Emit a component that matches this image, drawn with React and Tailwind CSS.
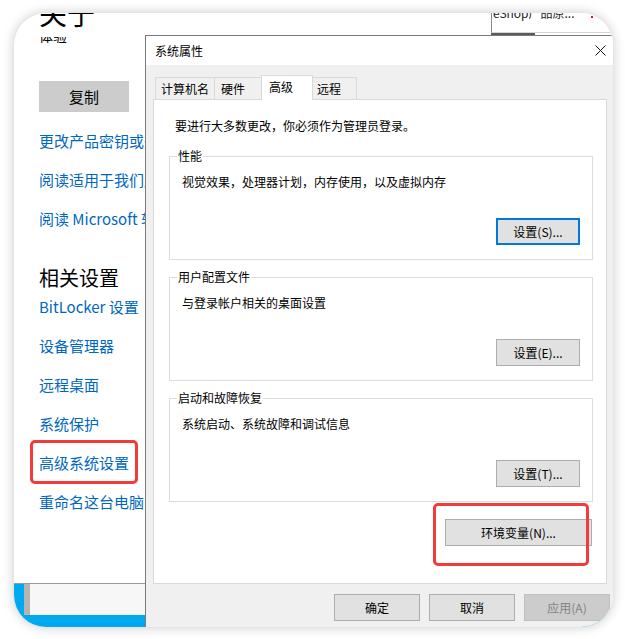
const font = "font-['Noto_Sans_CJK_SC','Liberation_Sans',sans-serif]";

function Btn({ children, focused, disabled, className = "" }) {
  const base = "h-[27px] flex items-center justify-center text-[12px] leading-[16px] ";
  const look = disabled
    ? "bg-[#cccccc] border border-[#bfbfbf] text-[#838383]"
    : focused
    ? "bg-[#e1e1e1] border-2 border-[#0078d7] text-black"
    : "bg-[#e1e1e1] border border-[#adadad] text-black";
  return <div className={base + look + " " + className}>{children}</div>;
}

function Group({ label, text, button, focused }) {
  return (
    <div className="relative ml-[15px] w-[424px] h-[104px] border border-[#dcdcdc]">
      <span className="absolute left-[7px] top-[-9px] px-[1px] bg-white text-[12px] leading-[16px] text-black">
        {label}
      </span>
      <div className="mt-[17px] pl-[12px] text-[12px] leading-[16px] text-black">{text}</div>
      <div className="mt-[28px] flex justify-end pr-[12px]">
        <Btn focused={focused} className="w-[84px]">{button}</Btn>
      </div>
    </div>
  );
}

function Link({ children, className = "" }) {
  return (
    <div className={"text-[15px] leading-[20px] text-[#0067c0] whitespace-nowrap " + className}>{children}</div>
  );
}

function CloseIcon() {
  return (
    <svg width="11" height="11" viewBox="0 0 11 11" fill="none">
      <path d="M0.5 0.5L10.5 10.5M10.5 0.5L0.5 10.5" stroke="#111" strokeWidth="1" />
    </svg>
  );
}

export default function App() {
  return (
    <div className={"w-[625px] h-[639px] bg-white pt-[13px] pl-[14px] " + font}>
      <div className="relative w-[599px] h-[614px] rounded-[32px] overflow-hidden bg-white shadow-[0_0_12px_rgba(0,0,0,0.22)]">
        {/* Settings window underneath */}
        <div className="flex flex-col h-full">
          <div className="flex-1 pl-[25px] overflow-hidden">
            <div className="mt-[-15px] text-[28px] leading-[30px] text-black">关于</div>
            <div className="mt-[9px] h-[6px] overflow-hidden">
              <div className="mt-[-9px] text-[14px] leading-[16px] text-black">体验</div>
            </div>
            <div className="mt-[38px] w-[90px] h-[31px] bg-[#cccccc] flex items-center justify-center text-[15px] leading-[20px] text-black">
              复制
            </div>
            <Link className="mt-[19px]">更改产品密钥或升级 Windows</Link>
            <Link className="mt-[19px]">阅读适用于我们服务的 Microsoft 服务协议</Link>
            <Link className="mt-[19px]">阅读 Microsoft 软件许可条款</Link>
            <div className="mt-[35px] text-[20px] leading-[28px] text-black">相关设置</div>
            <Link className="mt-[5px]">BitLocker 设置</Link>
            <Link className="mt-[19px]">设备管理器</Link>
            <Link className="mt-[19px]">远程桌面</Link>
            <Link className="mt-[19px]">系统保护</Link>
            <Link className="mt-[19px]">高级系统设置</Link>
            <Link className="mt-[19px]">重命名这台电脑</Link>
          </div>
          <div className="h-[44px] border-t border-[#9a9a9a] flex">
            <div className="w-[10px] bg-[#00a9f0]" />
            <div className="flex-1 flex flex-col">
              <div className="h-[31px] flex">
                <div className="w-[6px] bg-[#b4b4b4]" />
                <div className="flex-1 bg-[#f7f7f7]" />
              </div>
              <div className="flex-1 bg-[#00a9f0]" />
            </div>
          </div>
        </div>

        {/* Background window fragment top-right */}
        <div className="absolute left-[477px] top-0 w-[122px]">
          <div className="relative h-[20px] bg-white border-l border-[#8a8a8a] border-b border-b-[#d4d4d4] overflow-hidden">
            <div className="mt-[-10px] pl-[1px] text-[12px] leading-[20px] text-[#222] whitespace-nowrap">
              eShop产品原...
            </div>
            <div className="absolute left-[99px] top-[3px] w-[2px] h-[2px] bg-[#e81123]" />
          </div>
          <div className="h-[2px] w-[44px] bg-[#5a5a5a]" />
        </div>

        {/* System properties dialog */}
        <div className="absolute left-[131px] top-[22px] w-[470px] h-[600px] border-t border-l border-[#7a7a7a] bg-[#f0f0f0]">
          <div className="h-[29px] bg-white flex items-center justify-between pl-[9px] pr-[9px]">
            <span className="text-[12px] leading-[16px] text-black">系统属性</span>
            <CloseIcon />
          </div>
          <div className="pl-[7px] pt-[10px]">
            <div className="relative z-10 mb-[-1px] h-[25px] flex items-end pl-[2px] text-[12px] leading-[16px] text-black">
              <div className="mb-[1px] w-[60px] h-[22px] border border-b-0 border-[#d9d9d9] pl-[5px] flex items-center">
                计算机名
              </div>
              <div className="mb-[1px] w-[47px] h-[22px] border-t border-r border-[#d9d9d9] pl-[6px] flex items-center">
                硬件
              </div>
              <div className="ml-[-1px] w-[52px] h-[25px] bg-white border border-b-0 border-[#d9d9d9] pl-[7px] pb-[2px] flex items-center">
                高级
              </div>
              <div className="mb-[1px] w-[44px] h-[22px] border-t border-r border-[#d9d9d9] pl-[4px] flex items-center">
                远程
              </div>
            </div>
            <div className="w-[454px] h-[485px] border border-[#d9d9d9] bg-white">
              <div className="mt-[18px] pl-[21px] text-[12px] leading-[16px] text-black">
                要进行大多数更改，你必须作为管理员登录。
              </div>
              <div className="mt-[22px]">
                <Group label="性能" text="视觉效果，处理器计划，内存使用，以及虚拟内存" button="设置(S)..." focused />
              </div>
              <div className="mt-[17px]">
                <Group label="用户配置文件" text="与登录帐户相关的桌面设置" button="设置(E)..." />
              </div>
              <div className="mt-[17px]">
                <Group label="启动和故障恢复" text="系统启动、系统故障和调试信息" button="设置(T)..." />
              </div>
              <div className="mt-[17px] ml-[291px]">
                <Btn className="w-[147px]">环境变量(N)...</Btn>
              </div>
            </div>
            <div className="mt-[10px] ml-[181px] flex gap-[9px]">
              <Btn className="w-[86px]">确定</Btn>
              <Btn className="w-[86px]">取消</Btn>
              <Btn disabled className="w-[86px]">应用(A)</Btn>
            </div>
          </div>
        </div>

        {/* Red highlight annotations */}
        <div className="absolute left-[16px] top-[427px] w-[108px] h-[44px] rounded-[5px] border-[3px] border-[#f33b3b]" />
        <div className="absolute left-[419px] top-[490px] w-[156px] h-[63px] rounded-[5px] border-[3px] border-[#f33b3b]" />
      </div>
    </div>
  );
}
